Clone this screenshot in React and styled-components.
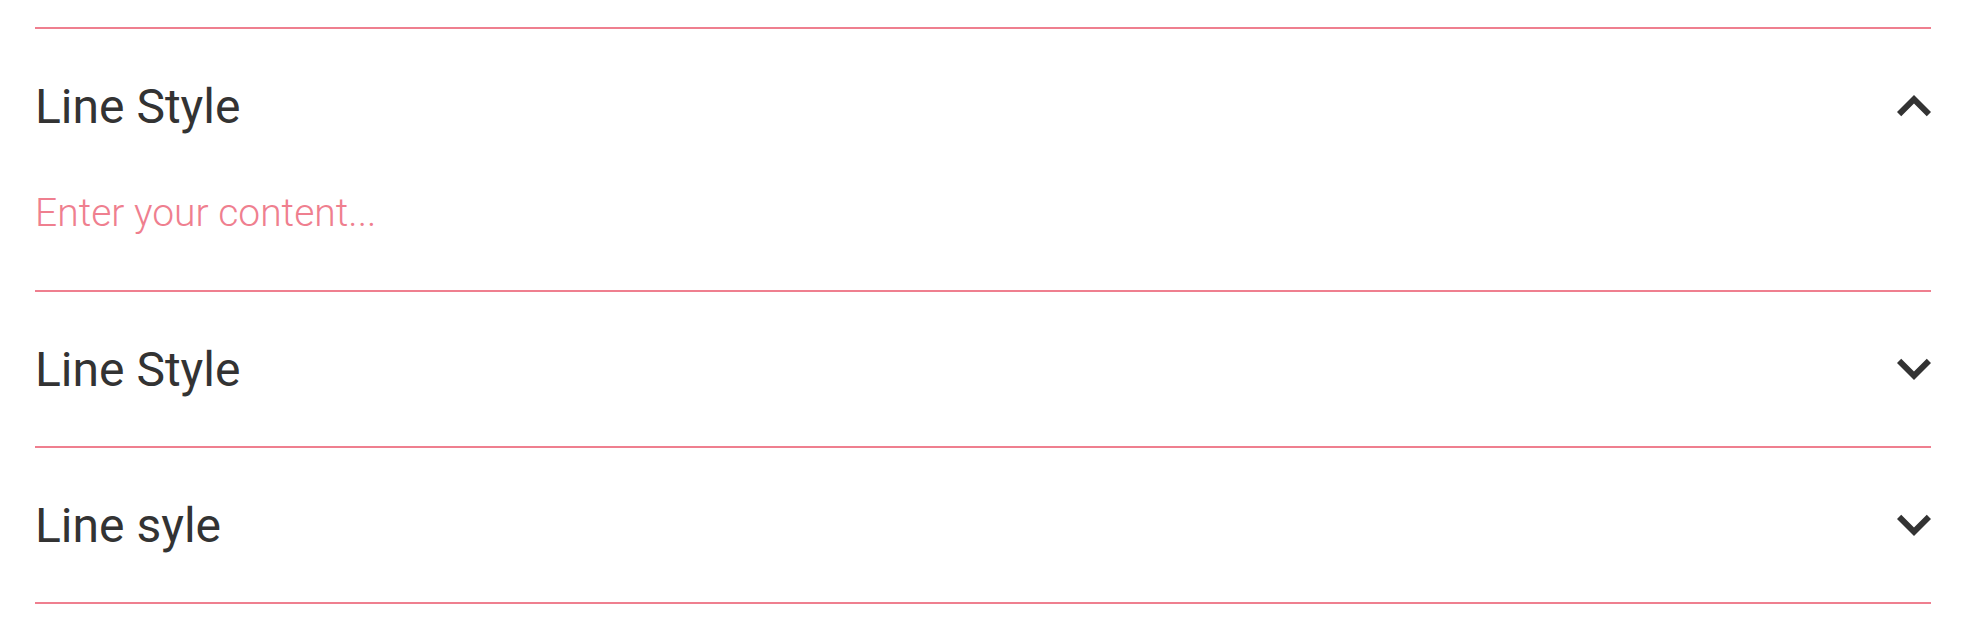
import { useState } from 'react';
import styled, { createGlobalStyle } from 'styled-components';

const GlobalStyle = createGlobalStyle`
	body {
		margin: 0;
		background: #fff;
		font-family: Roboto, 'Liberation Sans', sans-serif;
	}
`;

const Accordion = styled.div`
	padding: 27px 35px 0;
`;

const Item = styled.div`
	border-top: 2px solid #ef7f8f;
	&:last-child {
		border-bottom: 2px solid #ef7f8f;
	}
`;

const Header = styled.div`
	height: 154px;
	display: flex;
	align-items: center;
	justify-content: space-between;
	cursor: pointer;
	user-select: none;
`;

const Title = styled.span`
	font-size: 48px;
	font-weight: 400;
	color: #333;
`;

const Content = styled.div`
	padding: 7px 0 53px;
	font-size: 39px;
	line-height: 47px;
	font-weight: 300;
	color: #ef7f8f;
`;

const Icon = styled.svg`
	display: block;
	flex: none;
	transform: ${(p) => (p.$open ? 'none' : 'scaleY(-1)')};
`;

const Chevron = ({ open }) => (
	<Icon $open={open} width='34' height='22' viewBox='0 0 34 22'>
		<polygon points='0,17 17,0 34,17 29.76,21.24 17,8.5 4.24,21.24' fill='#333' />
	</Icon>
);

const items = [
	{ title: 'Line Style', body: 'Enter your content...' },
	{ title: 'Line Style', body: 'Enter your content...' },
	{ title: 'Line syle', body: 'Enter your content...' },
];

const App = () => {
	const [openIdx, setOpenIdx] = useState(0);

	return (
		<>
			<GlobalStyle />
			<Accordion>
				{items.map((item, i) => (
					<Item key={i}>
						<Header onClick={() => setOpenIdx(openIdx === i ? -1 : i)}>
							<Title>{item.title}</Title>
							<Chevron open={openIdx === i} />
						</Header>
						{openIdx === i && <Content>{item.body}</Content>}
					</Item>
				))}
			</Accordion>
		</>
	);
};

export default App;
